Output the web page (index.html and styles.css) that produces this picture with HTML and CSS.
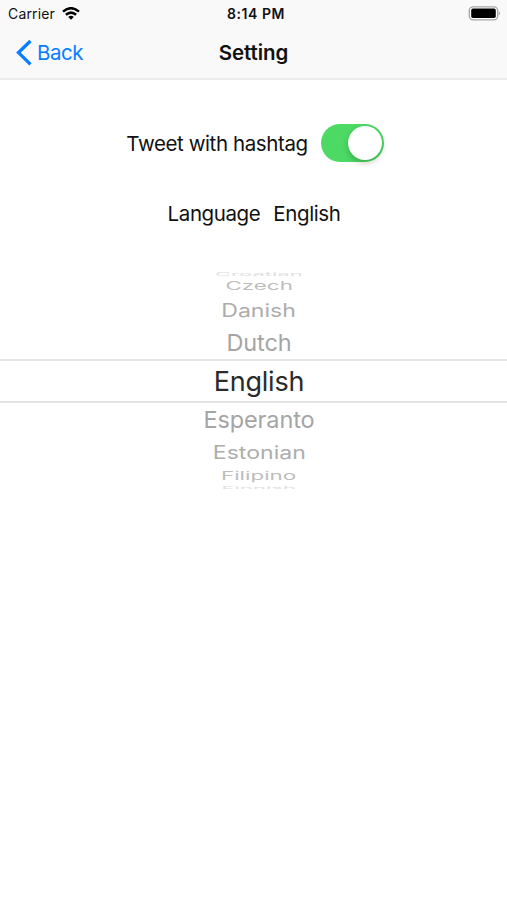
FILE: index.html
```html
<!DOCTYPE html>
<html lang="en">
<head>
<meta charset="utf-8">
<title>Setting</title>
<link rel="stylesheet" href="styles.css">
</head>
<body>
<header class="top">
  <div class="status">
    <div class="carrier"><span>Carrier</span>
      <svg class="wifi" width="18" height="13" viewBox="0 0 18 13"><g fill="none" stroke="#000" stroke-width="2.5"><path d="M1 4.6Q9-2.2 17 4.6"/><path d="M3.9 7.8Q9 3.4 14.1 7.8"/></g><path d="M6.2 10Q9 7.7 11.8 10L9 12.8Z"/></svg>
    </div>
    <div class="time">8:14 PM</div>
    <svg class="battery" width="33" height="15" viewBox="0 0 33 15"><rect x="1.3" y=".8" width="28.4" height="13" rx="3.8" fill="#fff" stroke="#a5a5a5" stroke-width="1.3"/><rect x="3.2" y="2.6" width="24.6" height="9.4" rx="1.8"/><path d="M30.8 5Q33 7.3 30.8 9.6Z" fill="#999"/></svg>
  </div>
  <nav class="nav">
    <a class="back"><svg width="17" height="28" viewBox="0 0 17 28"><path d="M15.5 2L3.5 13.6l12 11.8" fill="none" stroke="#087dff" stroke-width="3.3"/></svg><span>Back</span></a>
    <h1>Setting</h1>
  </nav>
</header>
<main>
  <div class="row hashtag"><span>Tweet with hashtag</span><div class="switch"><div class="knob"></div></div></div>
  <div class="row language"><span>Language</span><span>English</span></div>
  <div class="wheel">
    <div class="item edge"><span class="w4">Croatian</span></div>
    <div class="item h3"><span class="w3">Czech</span></div>
    <div class="item h2"><span class="w2">Danish</span></div>
    <div class="item h1"><span class="w1">Dutch</span></div>
    <div class="item selected"><span>English</span></div>
    <div class="item h1"><span class="w1">Esperanto</span></div>
    <div class="item h2"><span class="w2">Estonian</span></div>
    <div class="item h3"><span class="w3">Filipino</span></div>
    <div class="item edge"><span class="w4">Finnish</span></div>
  </div>
</main>
</body>
</html>
```
FILE: styles.css
```css
* { box-sizing: border-box; }
body { margin: 0; background: #fff; color: #111; font-family: Inter, "Liberation Sans", sans-serif; height: 900px; overflow: hidden; }
.top { height: 80px; background: #f9f9f9; border-bottom: 2px solid #ebebeb; }
.status { height: 27px; display: grid; grid-template-columns: 1fr auto 1fr; align-items: center; padding: 0 6px 0 8px; font-size: 14px; }
.carrier { display: flex; align-items: center; gap: 7px; letter-spacing: 0.15px; }
.wifi { margin-top: -1px; }
.time { font-weight: 600; font-size: 14px; letter-spacing: 0.55px; padding-left: 3px; }
.battery { justify-self: end; }
.nav { height: 51px; display: grid; grid-template-columns: 1fr auto 1fr; align-items: center; padding: 0 15px; }
.back { display: flex; align-items: center; gap: 5px; color: #087dff; font-size: 20.5px; letter-spacing: -0.5px; }
h1 { margin: 0; font-size: 20.5px; font-weight: 600; letter-spacing: -0.1px; }
.row { display: flex; justify-content: center; align-items: center; font-size: 20.5px; letter-spacing: -0.4px; }
.hashtag { margin-top: 43px; height: 40px; gap: 13px; padding-left: 3px; }
.switch { width: 63px; height: 38px; border-radius: 19px; background: #4cd964; padding: 2px; display: flex; justify-content: flex-end; }
.knob { width: 34px; height: 34px; border-radius: 50%; background: #fff; box-shadow: 0 3px 6px rgba(0,0,0,.2); }
.language { margin-top: 35px; height: 30px; gap: 13px; padding-left: 1px; }
.wheel { margin-top: 44px; padding-left: 11px; background: linear-gradient(#e4e4e4,#e4e4e4) 0 86.5px / 100% 2px no-repeat, linear-gradient(#e4e4e4,#e4e4e4) 0 129px / 100% 2px no-repeat; color: #a5a5a5; }
.item { display: flex; justify-content: center; align-items: center; white-space: nowrap; line-height: 1; }
.item span { display: block; }
.edge { height: 4px; overflow: hidden; color: #dedede; }
.edge:last-child { height: 3px; }
.h3 { height: 20px; color: #bdbdbd; }
.h2 { height: 28px; color: #adadad; }
.h1 { height: 37px; }
.selected { height: 40px; font-size: 27px; letter-spacing: -0.25px; color: #2b2b2b; }
.w1 { font-size: 23.5px; letter-spacing: -0.1px; }
.w2 { font-size: 22px; transform: scale(1.05, .83); }
.w3 { font-size: 20px; transform: scale(1.12, .58); }
.w4 { font-size: 20px; transform: scale(1.1, .25); }
```
